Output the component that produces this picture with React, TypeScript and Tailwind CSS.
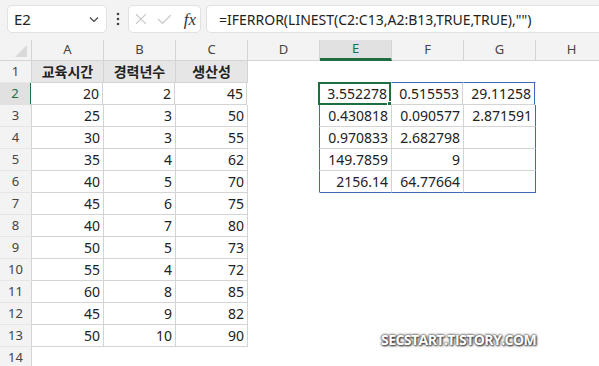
import React from "react";

const COLS = ["A", "B", "C", "D", "E", "F", "G", "H"];

const dataAC: string[][] = [
  ["교육시간", "경력년수", "생산성"],
  ["20", "2", "45"],
  ["25", "3", "50"],
  ["30", "3", "55"],
  ["35", "4", "62"],
  ["40", "5", "70"],
  ["45", "6", "75"],
  ["40", "7", "80"],
  ["50", "5", "73"],
  ["55", "4", "72"],
  ["60", "8", "85"],
  ["45", "9", "82"],
  ["50", "10", "90"],
];

const dataEG: string[][] = [
  ["3.552278", "0.515553", "29.11258"],
  ["0.430818", "0.090577", "2.871591"],
  ["0.970833", "2.682798", ""],
  ["149.7859", "9", ""],
  ["2156.14", "64.77664", ""],
];

type Edge = "none" | "gray" | "blue";

function inAC(r: number, c: number) {
  return r >= 1 && r <= 13 && c >= 0 && c <= 2;
}
function inEG(r: number, c: number) {
  return r >= 2 && r <= 6 && c >= 4 && c <= 6;
}

function rightEdge(r: number, c: number): Edge {
  if (inEG(r, c)) return c === 6 ? "blue" : "gray";
  if (inEG(r, c + 1)) return "blue";
  if (inAC(r, c) || inAC(r, c + 1)) return "gray";
  return "none";
}
function bottomEdge(r: number, c: number): Edge {
  if (inEG(r, c)) return r === 6 ? "blue" : "gray";
  if (inEG(r + 1, c)) return "blue";
  if (inAC(r, c) || inAC(r + 1, c)) return "gray";
  return "none";
}

const rClass: Record<Edge, string> = {
  none: "border-r-white",
  gray: "border-r-[#d4d4d4]",
  blue: "border-r-[#3f69b8]",
};
const bClass: Record<Edge, string> = {
  none: "border-b-white",
  gray: "border-b-[#d4d4d4]",
  blue: "border-b-[#3f69b8]",
};

function cellText(r: number, c: number): string {
  if (inAC(r, c)) return dataAC[r - 1][c];
  if (inEG(r, c)) return dataEG[r - 2][c - 4];
  return "";
}

export default function App() {
  const rows = Array.from({ length: 14 }, (_, i) => i + 1);
  return (
    <div
      className="w-[599px] h-[366px] overflow-hidden bg-white relative text-[#222]"
      style={{ fontFamily: '"Noto Sans", "Noto Sans CJK KR", sans-serif' }}
    >
      {/* Formula bar */}
      <div className="h-[40px] bg-[#f3f3f3] flex items-start pt-[5px]">
        <div className="shrink-0 ml-[7px] w-[100px] h-[28px] bg-white rounded-[5px] border border-[#e1e1e1] flex items-center justify-between pl-[6px] pr-[6px]">
          <span className="text-[15px] text-[#222]">E2</span>
          <svg width="12" height="12" viewBox="0 0 12 12">
            <path d="M2 4.5 L6 8.5 L10 4.5" fill="none" stroke="#444" strokeWidth="1.2" />
          </svg>
        </div>
        <div className="shrink-0 w-[21px] h-[28px] flex items-center justify-center">
          <svg width="4" height="14" viewBox="0 0 4 14">
            <circle cx="2" cy="2" r="1.3" fill="#444" />
            <circle cx="2" cy="7" r="1.3" fill="#444" />
            <circle cx="2" cy="12" r="1.3" fill="#444" />
          </svg>
        </div>
        <div className="shrink-0 w-[73px] h-[28px] bg-white rounded-[5px] border border-[#e1e1e1] flex items-center pl-[6px] pr-[4px] gap-[10px]">
          <svg width="12" height="12" viewBox="0 0 12 12">
            <path d="M1 1 L11 11 M11 1 L1 11" stroke="#c4c4c4" strokeWidth="1.1" />
          </svg>
          <svg width="15" height="12" viewBox="0 0 15 12">
            <path d="M1 6 L5.5 10.5 L14 2" fill="none" stroke="#c4c4c4" strokeWidth="1.1" />
          </svg>
          <span
            className="italic text-[17px] leading-none text-[#333] ml-[2px]"
            style={{ fontFamily: '"Liberation Serif", serif' }}
          >
            fx
          </span>
        </div>
        <div className="ml-[5px] flex-1 min-w-0 h-[28px] bg-white rounded-l-[5px] border border-r-0 border-[#e1e1e1] flex items-center pl-[12px]">
          <span className="text-[14px] text-[#222] whitespace-nowrap">
            =IFERROR(LINEST(C2:C13,A2:B13,TRUE,TRUE),"")
          </span>
        </div>
      </div>

      {/* Column headers */}
      <div className="flex h-[21px] bg-[#f3f3f3] border-b border-[#d4d4d4]">
        <div className="w-[32px] shrink-0 border-r border-[#d4d4d4] relative">
          <svg className="absolute right-[4px] bottom-[3px]" width="12" height="12" viewBox="0 0 12 12">
            <path d="M12 0 L12 12 L0 12 Z" fill="#dadada" />
          </svg>
        </div>
        {COLS.map((c) =>
          c === "E" ? (
            <div
              key={c}
              className="w-[72px] shrink-0 border-r border-[#d4d4d4] bg-[#e1e1e1] border-b-[3px] border-b-[#1e6e42] flex items-center justify-center text-[13px] text-[#1e6e42] -mb-px"
            >
              {c}
            </div>
          ) : (
            <div
              key={c}
              className="w-[72px] shrink-0 border-r border-[#d4d4d4] flex items-center justify-center text-[13px] text-[#444]"
            >
              {c}
            </div>
          )
        )}
      </div>

      {/* Rows */}
      {rows.map((r) => (
        <div key={r} className="flex h-[22px]">
          {r === 2 ? (
            <div className="w-[32px] shrink-0 bg-[#e1e1e1] border-r-[2px] border-r-[#1e6e42] border-b border-b-[#e1e1e1] flex items-center justify-center text-[13px] text-[#1e6e42] -mr-px">
              {r}
            </div>
          ) : (
            <div className="w-[32px] shrink-0 bg-[#f3f3f3] border-r border-r-[#d4d4d4] border-b border-b-[#e6e6e6] flex items-center justify-center text-[13px] text-[#444]">
              {r}
            </div>
          )}
          {COLS.map((_, ci) => {
            const txt = cellText(r, ci);
            const isHeader = r === 1 && ci <= 2;
            const isSel = r === 2 && ci === 4;
            return (
              <div
                key={ci}
                className={
                  "w-[72px] shrink-0 border-r border-b relative flex items-center " +
                  rClass[rightEdge(r, ci)] +
                  " " +
                  bClass[bottomEdge(r, ci)] +
                  (isHeader
                    ? " bg-[#e7e6e6] justify-center font-bold text-[14px]"
                    : " bg-white justify-end pr-[3px] text-[14px]") +
                  (r === 2 && ci === 0 ? " w-[71px]" : "")
                }
              >
                <span className="whitespace-nowrap text-[#222]">{txt}</span>
                {isSel && (
                  <div className="absolute -left-px -top-px -right-px -bottom-px border-2 border-[#1e6e42] pointer-events-none">
                    <div className="absolute -right-[4px] -bottom-[4px] w-[6px] h-[6px] bg-[#1e6e42] border border-white" />
                  </div>
                )}
              </div>
            );
          })}
          <div className="flex-1" />
        </div>
      ))}

      {/* Watermark */}
      <div
        className="absolute left-[381px] top-[329px] text-[14px] font-bold text-white tracking-[-0.55px] [text-shadow:0_0_3px_#333,0_0_2px_#555,1px_1px_2px_#444]"
        style={{ fontFamily: '"Open Sans", sans-serif' }}
      >
        SECSTART.TISTORY.COM
      </div>
    </div>
  );
}
